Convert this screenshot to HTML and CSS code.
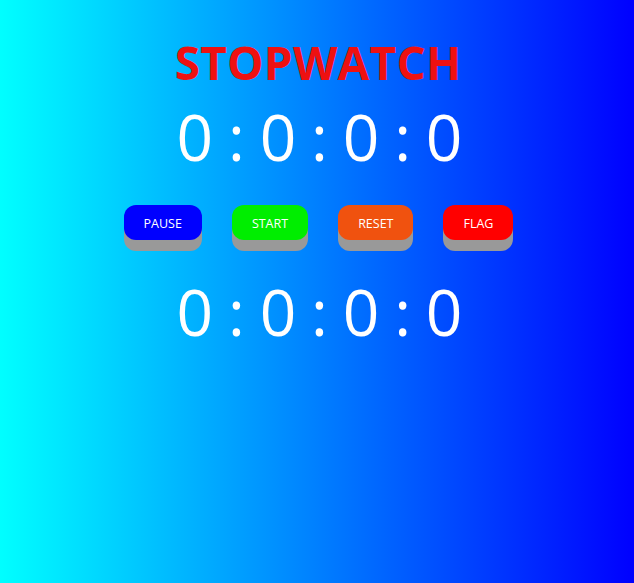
FILE: index.html
```html
<!DOCTYPE html>
<html>
<head>
<meta charset="utf-8">
<link rel="stylesheet" href="styles.css">
</head>
<body>
<div class="page">
  <h1 class="title">STOPWATCH</h1>
  <div class="time">0 : 0 : 0 : 0</div>
  <div class="buttons">
    <button class="btn btn-pause">PAUSE</button>
    <button class="btn btn-start">START</button>
    <button class="btn btn-reset">RESET</button>
    <button class="btn btn-flag">FLAG</button>
  </div>
  <div class="time time-flag">0 : 0 : 0 : 0</div>
</div>
</body>
</html>
```
FILE: styles.css
```css
html, body {
  margin: 0;
  padding: 0;
  height: 100%;
}
body {
  background: linear-gradient(to right, #00ffff, #0000ff);
  font-family: "Open Sans", "Noto Sans", sans-serif;
}
.page {
  display: flex;
  flex-direction: column;
  align-items: center;
  padding-top: 33px;
}
.title {
  margin: 0;
  color: #ee1111;
  font-size: 46px;
  font-weight: 700;
  line-height: 58px;
  padding-left: 2px;
  letter-spacing: 0.2px;
}
.time {
  color: #ffffff;
  font-size: 64px;
  line-height: 90px;
  word-spacing: -1.8px;
  margin-top: 1px;
  padding-left: 5px;
}
.buttons {
  display: flex;
  gap: 30px;
  margin-top: 23px;
  padding-left: 3px;
}
.btn {
  border: none;
  border-radius: 12px;
  padding: 1px 20px 0;
  height: 35px;
  color: #ffffff;
  font-family: "Open Sans", "Noto Sans", sans-serif;
  font-size: 12.5px;
  box-shadow: 0 11px #999999;
}
.btn-pause { background: #0000ff; }
.btn-start { background: #00ee00; }
.btn-reset { background: #f0520f; }
.btn-flag { background: #ff0000; }
.time-flag {
  margin-top: 27px;
}
```
